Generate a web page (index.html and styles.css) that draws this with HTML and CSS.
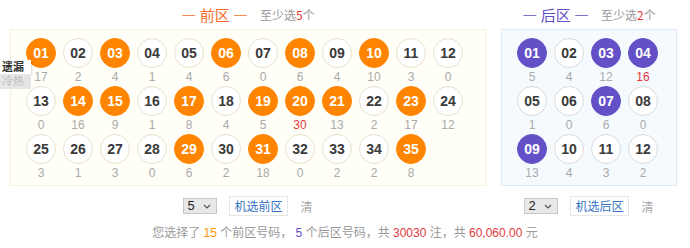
FILE: index.html
```html
<!DOCTYPE html>
<html lang="zh-CN">
<head>
  <meta charset="UTF-8">
  <title>大乐透选号</title>
  <link rel="stylesheet" href="styles.css">
</head>
<body>
  <div class="page">

    <!-- 左侧切换：遗漏 / 冷热 -->
    <div class="side-tabs">
      <span class="side-tab on">遗漏</span>
      <span class="side-tab">冷热</span>
    </div>

    <div class="zones">
      <!-- 前区 -->
      <div class="zone zone-front">
        <div class="zone-title">
          <span class="zone-name">— 前区 —</span>
          <span class="zone-tip">至少选<em>5</em>个</span>
        </div>
        <div class="ball-box front-box">
          <div class="ball-item"><span class="ball on">01</span><span class="miss">17</span></div>
          <div class="ball-item"><span class="ball">02</span><span class="miss">2</span></div>
          <div class="ball-item"><span class="ball on">03</span><span class="miss">4</span></div>
          <div class="ball-item"><span class="ball">04</span><span class="miss">1</span></div>
          <div class="ball-item"><span class="ball">05</span><span class="miss">4</span></div>
          <div class="ball-item"><span class="ball on">06</span><span class="miss">6</span></div>
          <div class="ball-item"><span class="ball">07</span><span class="miss">0</span></div>
          <div class="ball-item"><span class="ball on">08</span><span class="miss">6</span></div>
          <div class="ball-item"><span class="ball">09</span><span class="miss">4</span></div>
          <div class="ball-item"><span class="ball on">10</span><span class="miss">10</span></div>
          <div class="ball-item"><span class="ball">11</span><span class="miss">3</span></div>
          <div class="ball-item"><span class="ball">12</span><span class="miss">0</span></div>

          <div class="ball-item"><span class="ball">13</span><span class="miss">0</span></div>
          <div class="ball-item"><span class="ball on">14</span><span class="miss">16</span></div>
          <div class="ball-item"><span class="ball on">15</span><span class="miss">9</span></div>
          <div class="ball-item"><span class="ball">16</span><span class="miss">1</span></div>
          <div class="ball-item"><span class="ball on">17</span><span class="miss">8</span></div>
          <div class="ball-item"><span class="ball">18</span><span class="miss">4</span></div>
          <div class="ball-item"><span class="ball on">19</span><span class="miss">5</span></div>
          <div class="ball-item"><span class="ball on">20</span><span class="miss max">30</span></div>
          <div class="ball-item"><span class="ball on">21</span><span class="miss">13</span></div>
          <div class="ball-item"><span class="ball">22</span><span class="miss">2</span></div>
          <div class="ball-item"><span class="ball on">23</span><span class="miss">17</span></div>
          <div class="ball-item"><span class="ball">24</span><span class="miss">12</span></div>

          <div class="ball-item"><span class="ball">25</span><span class="miss">3</span></div>
          <div class="ball-item"><span class="ball">26</span><span class="miss">1</span></div>
          <div class="ball-item"><span class="ball">27</span><span class="miss">3</span></div>
          <div class="ball-item"><span class="ball">28</span><span class="miss">0</span></div>
          <div class="ball-item"><span class="ball on">29</span><span class="miss">6</span></div>
          <div class="ball-item"><span class="ball">30</span><span class="miss">2</span></div>
          <div class="ball-item"><span class="ball on">31</span><span class="miss">18</span></div>
          <div class="ball-item"><span class="ball">32</span><span class="miss">0</span></div>
          <div class="ball-item"><span class="ball">33</span><span class="miss">2</span></div>
          <div class="ball-item"><span class="ball">34</span><span class="miss">2</span></div>
          <div class="ball-item"><span class="ball on">35</span><span class="miss">8</span></div>
        </div>
        <div class="ctrl">
          <label class="pick">
            <select><option>5</option></select>
            <svg class="pick-arrow" width="8" height="5" viewBox="0 0 8 5"><path d="M1 1l3 3 3-3" fill="none" stroke="#555" stroke-width="1.2"/></svg>
          </label>
          <button class="rand-btn">机选前区</button>
          <span class="clear">清</span>
        </div>
      </div>

      <!-- 后区 -->
      <div class="zone zone-back">
        <div class="zone-title">
          <span class="zone-name">— 后区 —</span>
          <span class="zone-tip">至少选<em>2</em>个</span>
        </div>
        <div class="ball-box back-box">
          <div class="ball-item"><span class="ball on">01</span><span class="miss">5</span></div>
          <div class="ball-item"><span class="ball">02</span><span class="miss">4</span></div>
          <div class="ball-item"><span class="ball on">03</span><span class="miss">12</span></div>
          <div class="ball-item"><span class="ball on">04</span><span class="miss max">16</span></div>

          <div class="ball-item"><span class="ball">05</span><span class="miss">1</span></div>
          <div class="ball-item"><span class="ball">06</span><span class="miss">0</span></div>
          <div class="ball-item"><span class="ball on">07</span><span class="miss">6</span></div>
          <div class="ball-item"><span class="ball">08</span><span class="miss">0</span></div>

          <div class="ball-item"><span class="ball on">09</span><span class="miss">13</span></div>
          <div class="ball-item"><span class="ball">10</span><span class="miss">4</span></div>
          <div class="ball-item"><span class="ball">11</span><span class="miss">3</span></div>
          <div class="ball-item"><span class="ball">12</span><span class="miss">2</span></div>
        </div>
        <div class="ctrl">
          <label class="pick">
            <select><option>2</option></select>
            <svg class="pick-arrow" width="8" height="5" viewBox="0 0 8 5"><path d="M1 1l3 3 3-3" fill="none" stroke="#555" stroke-width="1.2"/></svg>
          </label>
          <button class="rand-btn">机选后区</button>
          <span class="clear">清</span>
        </div>
      </div>
    </div>

    <p class="summary">
      您选择了 <em class="c-front">15</em> 个前区号码， <em class="c-back">5</em> 个后区号码，共 <em class="c-red">30030</em> 注，共 <em class="c-red">60,060.00</em> 元
    </p>
  </div>
</body>
</html>
```

FILE: styles.css
```css
/* 基本 */
body {
  margin: 0;
  font-family: "Liberation Sans", "Noto Sans CJK SC", sans-serif;
  font-size: 12px;
  color: #333;
  background: #fff;
}
em {
  font-style: normal;
}
.page {
  position: relative;
  padding: 5px 0 0 10px;
}

/* 左侧 遗漏 / 冷热 */
.side-tabs {
  position: absolute;
  left: 0;
  top: 60px;
  width: 31px;
  display: flex;
  flex-direction: column;
  z-index: 2;
}
.side-tab {
  height: 15px;
  line-height: 15px;
  padding-left: 2px;
  font-size: 11px;
  color: #bbb;
  background: #e6e6e6;
}
.side-tab.on {
  height: 14px;
  line-height: 14px;
  color: #333;
  font-weight: bold;
  background: #fff;
  box-shadow: 1px 1px 2px rgba(0, 0, 0, 0.15);
}

/* 区域 */
.zones {
  display: flex;
  gap: 15px;
  align-items: flex-start;
}
.zone {
  display: flex;
  flex-direction: column;
  align-items: center;
}
.zone-title {
  height: 20px;
  line-height: 20px;
  margin-bottom: 4px;
  display: flex;
  align-items: center;
  gap: 12px;
}
.zone-name {
  font-size: 15px;
  font-family: "Noto Sans CJK SC", sans-serif;
}
.zone-front .zone-name { color: #f46d2c; }
.zone-back .zone-name { color: #6450c6; }
.zone-tip {
  font-size: 12px;
  color: #999;
  font-family: "Noto Sans CJK SC", sans-serif;
}
.zone-tip em {
  color: #e33;
}

/* 号码框 */
.ball-box {
  box-sizing: border-box;
  display: grid;
  grid-auto-rows: 48px;
  column-gap: 7px;
  padding: 8px 0 3px 15px;
  border: 1px solid;
}
.front-box {
  width: 476px;
  grid-template-columns: repeat(12, 30px);
  background: #fffef7;
  border-color: #f6f1dc;
}
.back-box {
  width: 176px;
  grid-template-columns: repeat(4, 30px);
  background: #f5faff;
  border-color: #dfeaf6;
}
.ball-item {
  display: flex;
  flex-direction: column;
  align-items: center;
}
.ball {
  box-sizing: border-box;
  width: 30px;
  height: 30px;
  border-radius: 50%;
  border: 1px solid #e5e1cc;
  background: #fff;
  display: flex;
  align-items: center;
  justify-content: center;
  font-size: 14px;
  font-weight: bold;
  color: #3a3a3a;
}
.back-box .ball {
  border-color: #d9d9dc;
}
.front-box .ball.on {
  background: #ff8400;
  border-color: #ff8400;
  color: #fff;
}
.back-box .ball.on {
  background: #6450c6;
  border-color: #6450c6;
  color: #fff;
}
.miss {
  height: 18px;
  line-height: 18px;
  font-size: 12px;
  color: #aaa;
}
.miss.max {
  color: #e4393c;
}

/* 机选 */
.ctrl {
  display: flex;
  align-items: center;
  height: 20px;
  margin-top: 10px;
}
.pick {
  position: relative;
  display: block;
  width: 34px;
  height: 16px;
}
.pick select {
  appearance: none;
  -webkit-appearance: none;
  box-sizing: border-box;
  width: 34px;
  height: 16px;
  margin: 0;
  padding: 0 0 0 3px;
  border: 1px solid #c9c9c9;
  border-radius: 0;
  background: #e8e8e8;
  font-family: "Liberation Sans", sans-serif;
  font-size: 13px;
  line-height: 14px;
  color: #222;
}
.pick-arrow {
  position: absolute;
  right: 6px;
  top: 6px;
  pointer-events: none;
}
.rand-btn {
  box-sizing: border-box;
  height: 20px;
  margin-left: 12px;
  padding: 0 4px;
  border: 1px solid #e6e6e6;
  background: #fff;
  color: #3572c4;
  font-family: "Noto Sans CJK SC", sans-serif;
  font-size: 12px;
  line-height: 18px;
  cursor: pointer;
}
.clear {
  margin-left: 13px;
  color: #aaa;
  font-family: "Noto Sans CJK SC", sans-serif;
}

/* 合计 */
.summary {
  margin: 8px 0 0 -10px;
  height: 18px;
  line-height: 18px;
  text-align: center;
  color: #999;
}
.c-front { color: #ff9800; }
.c-back { color: #6450c6; }
.c-red { color: #e4393c; }
```
